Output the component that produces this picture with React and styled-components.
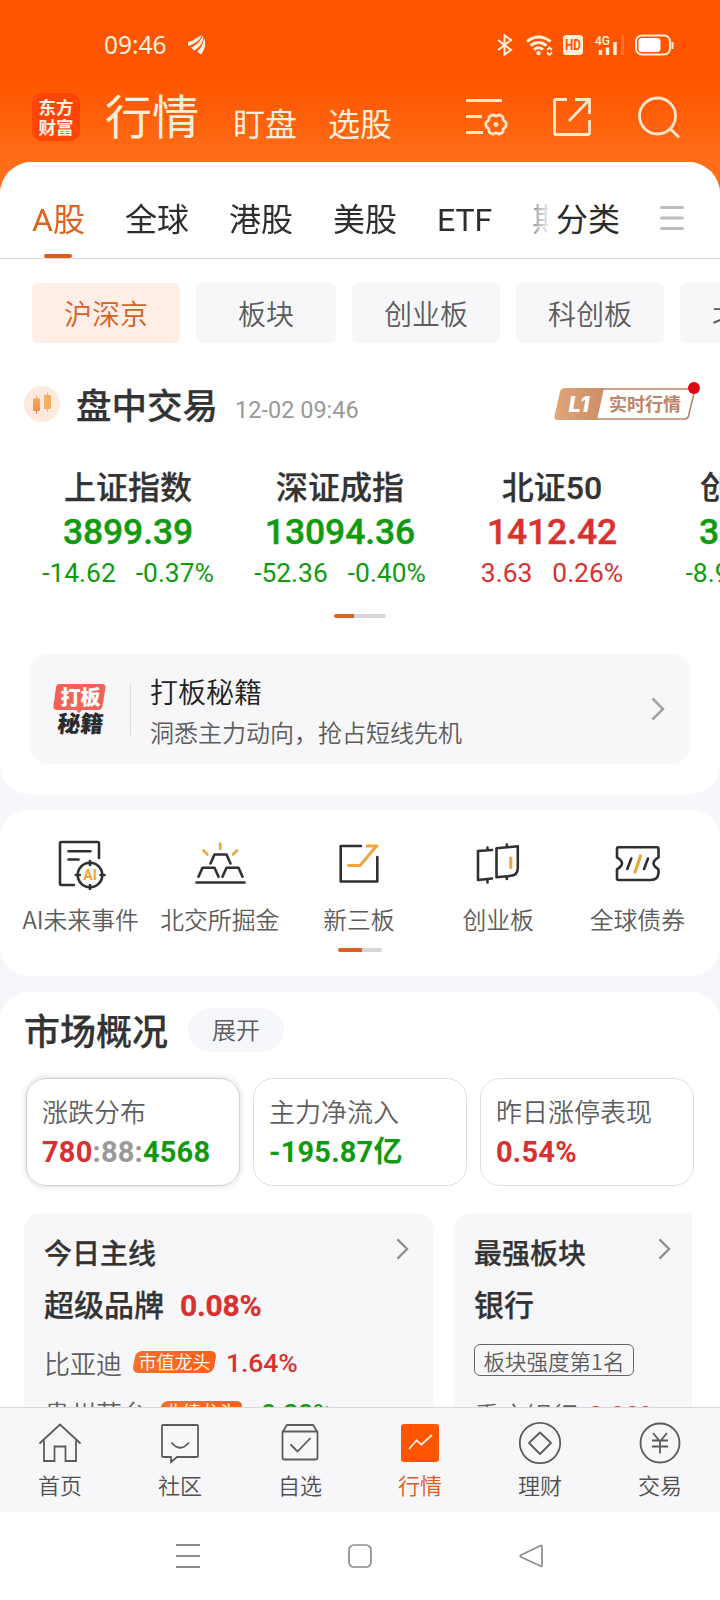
import styled, { createGlobalStyle } from 'styled-components';

const GlobalStyle = createGlobalStyle`
    *{
        box-sizing: border-box;
    }
    body{
        margin: 0;
        background: #fff;
        font-family: Roboto, "Noto Sans CJK SC", sans-serif;
        color: #333;
    }
    svg{
        display: block;
        flex: none;
    }
`

const Phone = styled.div`
    display: flex;
    flex-direction: column;
    width: 720px;
    height: 1600px;
    overflow: hidden;
    white-space: nowrap;
    background: linear-gradient(#ff5500 0, #ff5500 78px, #ff6f1a 168px, #ff6a14 200px);
`

/* ---------- top ---------- */

const StatusBar = styled.div`
    display: flex;
    align-items: center;
    height: 90px;
    padding: 0 46px 0 104px;
    color: #fff0dc;

    .time{
        flex: 1;
        display: flex;
        align-items: center;
        gap: 20px;
        font: 400 24.5px/30px "Noto Sans", sans-serif;
    }
`

const AppBar = styled.header`
    display: flex;
    align-items: center;
    height: 72px;
    padding: 0 39px 18px 32px;
    color: #ffeedb;
`

const Logo = styled.div`
    display: flex;
    flex-direction: column;
    justify-content: center;
    width: 48px;
    height: 48px;
    border-radius: 10px;
    background: #ff4508;
    color: #fff3e4;
    text-align: center;
    font: 700 17.5px/20px "Noto Sans CJK SC", sans-serif;
`

const AppTabs = styled.nav`
    display: flex;
    align-items: baseline;
    flex: 1;
    margin: 7px 0 0 25px;
    font-size: 32px;
    line-height: 56px;
    gap: 31px;

    b{
        font-weight: 400;
        font-size: 47px;
        margin-right: 3px;
    }
    span{
        position: relative;
        top: 2px;
    }
`

const AppActions = styled.div`
    display: flex;
    align-items: center;
    gap: 45px;

    svg:first-child{
        margin-right: -1px;
    }
`

const Content = styled.main`
    display: flex;
    flex-direction: column;
    gap: 16px;
    flex: 1;
    min-height: 0;
    overflow: hidden;
    border-radius: 32px 32px 0 0;
    background: #f5f7fa;
`

const Panel = styled.section`
    flex: none;
    height: ${p => p.$height};
    border-radius: ${p => p.$radius || '28px'};
    background: #fff;
    overflow: hidden;
`

/* ---------- tabs and chips ---------- */

const TabBar = styled.div`
    display: flex;
    align-items: center;
    height: 97px;
    padding: 0 36px 0 32px;
    border-bottom: 1px solid #d9d9db;
    font-size: 32px;

    svg{
        margin-top: 16px;
    }
`

const TabScroll = styled.div`
    display: flex;
    gap: 40px;
    width: 516px;
    height: 96px;
    overflow: hidden;
    -webkit-mask-image: linear-gradient(90deg, #000 480px, transparent 520px);
    mask-image: linear-gradient(90deg, #000 480px, transparent 520px);
`

const Tab = styled.span`
    position: relative;
    flex: none;
    line-height: 116px;
    color: ${p => p.$active ? '#e0601c' : '#2d2d2d'};

    &::after{
        content: '';
        display: ${p => p.$active ? 'block' : 'none'};
        position: absolute;
        left: 12px;
        top: 92px;
        width: 28px;
        height: 4px;
        border-radius: 2px;
        background: #dd5b1d;
    }
`

const SortTab = styled.span`
    flex: 1;
    padding-left: 8px;
    line-height: 116px;
    height: 96px;
    color: #2d2d2d;
`

const Chips = styled.div`
    display: flex;
    gap: 16px;
    padding: 24px 0 0 32px;
`

const Chip = styled.span`
    flex: none;
    min-width: 140px;
    height: 60px;
    padding: 0 32px;
    border-radius: 6px;
    text-align: center;
    font-size: 28px;
    font-weight: 350;
    line-height: 65px;
    background: ${p => p.$active ? '#ffeee6' : '#f7f7fa'};
    color: ${p => p.$active ? '#d8601f' : '#5c5c5c'};
`

/* ---------- index quotes ---------- */

const SessionRow = styled.div`
    display: flex;
    align-items: center;
    height: 54px;
    margin-top: 34px;
    padding: 0 20px 0 24px;

    h2{
        margin: 6px 17px 0 16px;
        font-size: 35.5px;
        line-height: 50px;
        font-weight: 500;
        -webkit-text-stroke: .25px;
    }
    time{
        flex: 1;
        margin-top: 12px;
        font-size: 23.5px;
        line-height: 30px;
        color: #999;
    }
`

const LevelBadge = styled.div`
    position: relative;
    display: flex;
    align-items: center;
    width: 146px;
    height: 32px;

    svg{
        position: absolute;
        inset: 0;
        overflow: visible;
    }
    i{
        position: relative;
        width: 50px;
        text-align: center;
        font: italic 800 22px/33px Inter, sans-serif;
        color: #fff;
    }
    span{
        position: relative;
        margin-left: 5px;
        font-size: 18px;
        line-height: 33px;
        font-weight: 700;
        color: #bd8469;
    }
`

const Quotes = styled.div`
    display: flex;
    margin: 35px 0 0 22px;
`

const Quote = styled.div`
    flex: none;
    width: 212px;
    text-align: center;
    color: ${p => p.$up ? '#d93030' : '#109a10'};

    h3{
        margin: 0;
        font-size: 32px;
        line-height: 44px;
        font-weight: 500;
        color: #333;
        -webkit-text-stroke: .25px;
    }
    strong{
        display: block;
        font-size: 35.5px;
        line-height: 44px;
        font-weight: 500;
        letter-spacing: -.1px;
        -webkit-text-stroke: .4px;
    }
    div{
        display: flex;
        justify-content: center;
        gap: 20px;
        font-size: 26.4px;
        line-height: 38px;
    }
`

const Pager = styled.div`
    width: ${p => p.$width}px;
    height: 4px;
    margin: ${p => p.$top}px auto 0;
    border-radius: 2px;
    background: linear-gradient(90deg, #dd5f22 ${p => p.$done}px, #d3d6da ${p => p.$done}px);
`

const Promo = styled.a`
    display: flex;
    align-items: center;
    height: 110px;
    margin: 36px 30px 0;
    padding: 0 25px 0 23px;
    border-radius: 18px;
    background: #f7f7fa;

    .text{
        flex: 1;
        margin: 7px 0 0 19px;
    }
    h4{
        margin: 0;
        font-size: 28px;
        line-height: 42px;
        font-weight: 350;
        color: #222;
    }
    p{
        margin: 0;
        font-size: 24px;
        line-height: 38px;
        font-weight: 350;
        color: #5c5c5c;
    }
`

const PromoMark = styled.div`
    position: relative;
    width: 55px;
    height: 52px;
    text-align: center;
    font: 700 20px/24px "Noto Sans CJK SC", sans-serif;
    color: #2b2b2b;

    svg{
        position: absolute;
        left: -1px;
        top: 1px;
    }
    b{
        display: block;
        position: relative;
        line-height: 28px;
        color: #fff;
    }
    span{
        display: block;
        font-size: 23px;
        font-weight: 900;
        line-height: 23px;
        transform: skewX(-5deg);
    }
`

const Divider = styled.span`
    width: 1px;
    height: 52px;
    margin-left: 22px;
    background: #dcdcdf;
`

/* ---------- shortcuts ---------- */

const Shortcuts = styled.div`
    display: grid;
    grid-template-columns: repeat(5, 139.2px);
    padding: 28px 0 0 11px;
`

const Shortcut = styled.a`
    display: flex;
    flex-direction: column;
    align-items: center;
    font-family: "Noto Sans CJK SC", sans-serif;
    font-size: 23.800px;
    line-height: 36px;
    font-weight: 350;
    color: #5c5c5c;

    svg{
        margin-bottom: 11px;
    }
`

/* ---------- market overview ---------- */

const SectionHead = styled.div`
    display: flex;
    align-items: center;
    height: 44px;
    margin: 16px 0 0 24px;

    h2{
        margin: 5px 20px 0 0;
        font-size: 36px;
        line-height: 44px;
        font-weight: 500;
        -webkit-text-stroke: .25px;
    }
    span{
        width: 96px;
        height: 44px;
        border-radius: 22px;
        background: #f5f7fa;
        text-align: center;
        font-size: 24px;
        font-weight: 350;
        line-height: 47px;
        color: #5c5c5c;
    }
`

const Stats = styled.div`
    display: flex;
    gap: 13px;
    margin: 26px 26px 0;
`

const Stat = styled.div`
    flex: 1;
    height: 108px;
    padding: 15px 0 0 15px;
    border: 1px solid ${p => p.$active ? '#d2d2d2' : '#e0e0e0'};
    border-radius: 20px;
    box-shadow: ${p => p.$active ? '0 0 6px rgba(0, 0, 0, .16)' : 'none'};

    h5{
        margin: 0;
        font-size: 26px;
        line-height: 38px;
        font-weight: 350;
        color: #5f5f5f;
    }
    div{
        font-size: 29px;
        line-height: 41px;
        font-weight: 700;
        letter-spacing: .2px;
        color: #999;
    }
`

const Num = styled.span`
    color: ${p => p.$up ? '#d93030' : '#109a10'};
`

const Boards = styled.div`
    display: flex;
    gap: 21px;
    margin: 27px 28px 0 24px;
`

const Board = styled.div`
    width: ${p => p.$width}px;
    height: 280px;
    padding: 22px 20px 0;
    border-radius: ${p => p.$radius};
    background: #f7f7fa;

    header{
        display: flex;
        align-items: center;
        justify-content: space-between;
        height: 40px;
        padding-right: ${p => p.$inset}px;
        font-size: 28px;
        line-height: 42px;
        font-weight: 500;
        -webkit-text-stroke: .25px;
    }
    header svg{
        margin-top: -12px;
    }
    h3{
        display: flex;
        gap: 16px;
        margin: 8px 0 0;
        font-size: 30px;
        line-height: 46px;
        font-weight: 500;
        -webkit-text-stroke: .25px;
    }
    h3 span{
        font-size: 30px;
        font-weight: 700;
        letter-spacing: -.2px;
    }
`

const StockRow = styled.div`
    display: flex;
    align-items: center;
    height: 50px;
    margin-top: ${p => p.$top || 0}px;
    font-size: 26px;
    font-weight: 350;
    color: #5f5f5f;

    span{
        font-size: 26.500px;
        line-height: 46px;
        font-weight: 500;
        margin: 2px 0 0 10px;
        letter-spacing: -.1px;
    }
`

const LeaderTag = styled.em`
    width: 81px;
    height: 22px;
    margin: -1px 1px 0 12px;
    border-radius: 6px;
    transform: skewX(-10deg);
    background: linear-gradient(90deg, #f2702c, #f9611a);
    font-size: 18px;
    font-weight: 400;
    line-height: 23px;
    font-style: normal;
    text-align: center;
    color: #fff4e8;

    b{
        display: block;
        font-weight: 400;
        transform: skewX(10deg);
    }
`

const RankTag = styled.div`
    width: 160px;
    height: 32px;
    margin-top: 15px;
    border: 1px solid #666;
    border-radius: 6px;
    text-align: center;
    font-family: "Noto Sans CJK SC", sans-serif;
    font-size: 21.500px;
    font-weight: 350;
    line-height: 31px;
    color: #5c5c5c;
`

/* ---------- bottom bars ---------- */

const TabNav = styled.nav`
    display: grid;
    grid-template-columns: repeat(6, 1fr);
    flex: none;
    height: 105px;
    padding-top: 13px;
    border-top: 1px solid #d9d9db;
    background: #f7f7fa;
`

const NavItem = styled.a`
    display: flex;
    flex-direction: column;
    align-items: center;
    font-size: 22px;
    line-height: 36px;
    font-weight: 350;
    color: ${p => p.$active ? '#dd5b1d' : '#505050'};

    svg{
        margin-bottom: 4px;
    }
`

const SystemBar = styled.div`
    display: flex;
    align-items: center;
    justify-content: space-between;
    flex: none;
    height: 88px;
    padding: 0 175px;
    background: #fff;
`

const Chevron = ({ w = 14, h = 24, color = '#999' }) => (
    <svg width={w} height={h} viewBox="0 0 14 24" fill="none" stroke={color} strokeWidth="2.5">
        <path d="M1.500 1.500 12 12 1.500 22.500" />
    </svg>
);

const StatusIcons = () => (
    <svg width="178" height="24" viewBox="0 0 178 24" fill="none" stroke="#fff0dc" strokeWidth="2">
        <path d="M2 7 15 17 8.500 21.500v-19L15 7 2 17" />
        <path d="M31 8.500q11.500-9 23.500 0M34.500 12.500q8-6 16 0M38 16.500q4.500-3.500 9 0" strokeWidth="3" />
        <circle cx="42.500" cy="20" r="2.200" fill="#fff0dc" stroke="none" />
        <path d="m51 17 2.500-2.500L56 17M51 19.500 53.500 22 56 19.500" strokeWidth="1.800" />
        <rect x="67" y="2" width="20" height="20" rx="3.500" fill="#fff0dc" stroke="none" />
        <text x="77" y="17" textAnchor="middle" fill="#ff5500" stroke="none" fontSize="14" fontWeight="700" textLength="16" lengthAdjust="spacingAndGlyphs">HD</text>
        <text x="99" y="12" fill="#fff0dc" stroke="none" fontSize="13" fontWeight="500" textLength="15" lengthAdjust="spacingAndGlyphs">4G</text>
        <path d="M104.500 22v-5M111.500 22v-7.500M119 22V9" strokeWidth="3.400" />
        <path d="M126.500 22V2" strokeWidth="3" opacity=".18" />
        <rect x="140" y="2.500" width="34" height="19" rx="6" />
        <rect x="142.500" y="5" width="22" height="14" rx="3.500" fill="#fff" stroke="none" />
        <path d="M176.500 9v7" />
    </svg>
);

const WingIcon = () => (
    <svg width="20" height="22" viewBox="0 0 20 22" fill="#fff3e4">
        <path d="M1 8C6 7 9 4 15 1c-2 5-7 9-14 11Z" />
        <path d="M4 13.500C10 11 13.500 7 16 1.500c1 6-3 12-9 15Z" />
        <path d="M10 17.500c4-3 6.500-8 7-14 2 6 1.500 11-3 17Z" />
    </svg>
);

const FilterIcon = () => (
    <svg width="42" height="40" viewBox="0 0 42 40" fill="none" stroke="#ffe6cd" strokeWidth="2.800">
        <path d="M0 3.500h36M0 19.500h16M0 35.500h17" />
        <path d="m10 2-2.600 2.300L6.800 7.700 3.400 9.600 0 8.400-3.400 9.600-6.800 7.700-7.400 4.300-10 2v-4l2.600-2.300.6-3.400 3.400-1.900L0-8.400 3.400-9.600 6.800-7.700 7.400-4.300 10-2Z" transform="translate(30 27.500)" strokeLinejoin="round" />
        <circle cx="30" cy="27.500" r="2.400" fill="#ffe6cd" stroke="none" />
    </svg>
);

const ShareIcon = () => (
    <svg width="40" height="40" viewBox="0 0 40 40" fill="none" stroke="#ffe6cd" strokeWidth="2.800">
        <path d="M15 2.500H4q-1.500 0-1.500 1.500v32q0 1.500 1.500 1.500h32q1.500 0 1.500-1.500V23" />
        <path d="M23 2.500h14.500V17M37 3 17 24" />
    </svg>
);

const SearchIcon = () => (
    <svg width="44" height="44" viewBox="0 0 44 44" fill="none" stroke="#ffe6cd" strokeWidth="2.800">
        <circle cx="20.500" cy="21" r="18" />
        <path d="m33 33.500 9 9" />
    </svg>
);

const CandleIcon = () => (
    <svg width="36" height="36" viewBox="0 0 36 36">
        <defs>
            <linearGradient id="candle" x1="0" x2="0" y1="0" y2="1">
                <stop offset="0" stopColor="#f9ae55" />
                <stop offset="1" stopColor="#f58647" />
            </linearGradient>
        </defs>
        <circle cx="18" cy="18" r="18" fill="#fdeade" />
        <path d="M12 9.500h1v3h2q1 0 1 1v10.500q0 1-1 1h-2v3h-1v-3h-2q-1 0-1-1V13.500q0-1 1-1h2Z" fill="url(#candle)" />
        <path d="M23 6.500h1v2.500h2q1 0 1 1v12q0 1-1 1h-2v2.500h-1V23h-2q-1 0-1-1V10q0-1 1-1h2Z" fill="#f9ad62" />
    </svg>
);

const shortcuts = [
    {
        label: 'AI未来事件',
        icon: <>
            <path d="M20 47H7.500Q6 47 6 45.500v-40Q6 4 7.500 4h36Q45 4 45 5.500V20M14.500 13.300h22M14.500 21.500h10" />
            <circle cx="36" cy="37" r="12.300" />
            <path d="M36 23v4M36 47v4M21.800 37h4M46.500 37h4" />
            <text x="36" y="42" textAnchor="middle" fill="#eba63c" stroke="none" fontFamily="Roboto" fontSize="14" fontWeight="700">AI</text>
        </>,
    },
    {
        label: '北交所掘金',
        icon: <>
            <path d="M3.500 44.500h48M5.500 38.700l4-9h12l4 9M29.500 38.700l4-9H45.500l4 9M17.500 25.500l4-9h12l4 9" />
            <path d="M27.200 11V5.500M14.500 16.500 10.500 12.500M40 16.500l4-4" stroke="#eba63c" />
        </>,
    },
    {
        label: '新三板',
        icon: <>
            <path d="M29 8H8.700v35.500h36.600V19" />
            <path d="M16.500 27.500H28L44.500 8M35 8h10" stroke="#eba63c" strokeWidth="3" />
        </>,
    },
    {
        label: '创业板',
        icon: <>
            <path d="M21 12 7 13v29l14-1.500M16.500 9.500V12.500M16.500 41.500v3" />
            <path d="M25.500 10.300l21.300-2V30q0 7.500-8 8l-13.300 1.300ZM35.800 6.500v2.500M35.800 38.500v2.500" />
            <path d="M39.800 20v9.500" stroke="#eba63c" strokeWidth="3.200" />
        </>,
    },
    {
        label: '全球债券',
        icon: <>
            <path d="M8.500 9.300Q7 9.300 7 10.800v8.500q10 6 0 12v9.200Q7 42 8.500 42h32q8 0 8-7.500v-3.200q-10-6 0-12v-8.500q0-1.500-1.500-1.500Z" />
            <path d="M21.300 20.500l-4 10.500M38 20.500l-4 10.500" />
            <path d="M30.500 18l-5.500 16" stroke="#eba63c" strokeWidth="3.200" />
        </>,
    },
];

const navItems = [
    { label: '首页', icon: <path d="m1.500 22.500 20.500-19 20.500 19M6 19.500V40h10.500V25.500h11V40H38V19.500" /> },
    { label: '社区', icon: <path d="M5 4h34q1 0 1 1v30q0 1-1 1H19l-6 5v-5H5q-1 0-1-1V5q0-1 1-1ZM13.500 21.500q8.500 10.500 17.500 0" /> },
    { label: '自选', icon: <path d="M4.500 11 9 4h26l4.500 7v26q0 1.500-1.500 1.500H6q-1.500 0-1.500-1.500ZM4.500 10.500h35M12.500 23.500l7 7L32.500 17" /> },
    {
        label: '行情',
        active: true,
        icon: <>
            <rect x="3" y="3" width="38" height="38" rx="3" fill="#ff5500" stroke="none" />
            <path d="m11 28 7.500-8.500 5 4L34 14" stroke="#ffeedb" />
        </>,
    },
    {
        label: '理财',
        icon: <>
            <circle cx="22" cy="22" r="20.200" />
            <path d="M22 11.500 33 22 22 33 11 22Z" strokeLinejoin="round" />
        </>,
    },
    {
        label: '交易',
        icon: <>
            <circle cx="22" cy="22" r="19.500" />
            <path d="m15 12 7 8.500L29 12M22 20v12.500M14 19.500h16M14 25.500h16" />
        </>,
    },
];

const quotes = [
    { name: '上证指数', value: '3899.39', diff: '-14.62', rate: '-0.37%' },
    { name: '深证成指', value: '13094.36', diff: '-52.36', rate: '-0.40%' },
    { name: '北证50', value: '1412.42', diff: '3.63', rate: '0.26%', up: true },
    { name: '创业板指', value: '3083.51', diff: '-8.99', rate: '-0.29%' },
];

const tabs = ['A股', '全球', '港股', '美股', 'ETF', '期货'];
const chips = ['沪深京', '板块', '创业板', '科创板', '北交所'];

const App = () => {
    return (
        <>
            <GlobalStyle />
            <Phone lang="zh-CN">
                <StatusBar>
                    <div className="time">09:46 <WingIcon /></div>
                    <StatusIcons />
                </StatusBar>
                <AppBar>
                    <Logo><span>东方</span><span>财富</span></Logo>
                    <AppTabs><b>行情</b><span>盯盘</span><span>选股</span></AppTabs>
                    <AppActions>
                        <FilterIcon />
                        <ShareIcon />
                        <SearchIcon />
                    </AppActions>
                </AppBar>

                <Content>
                    <Panel $height="632px" $radius="0 0 28px 28px">
                        <TabBar>
                            <TabScroll>
                                {tabs.map((t, i) => <Tab key={t} $active={i === 0}>{t}</Tab>)}
                            </TabScroll>
                            <SortTab>分类</SortTab>
                            <svg width="24" height="26" viewBox="0 0 24 26" stroke="#bdbdbd" strokeWidth="3" strokeLinecap="round">
                                <path d="M1.500 2.500h21M1.500 13h21M1.500 23.500h21" />
                            </svg>
                        </TabBar>
                        <Chips>
                            {chips.map((c, i) => <Chip key={c} $active={i === 0}>{c}</Chip>)}
                        </Chips>

                        <SessionRow>
                            <CandleIcon />
                            <h2>盘中交易</h2>
                            <time>12-02 09:46</time>
                            <LevelBadge>
                                <svg width="146" height="32" viewBox="0 0 146 32">
                                    <defs>
                                        <linearGradient id="level" x1="0" x2="1">
                                            <stop offset="0" stopColor="#dfa679" />
                                            <stop offset="1" stopColor="#cc8e69" />
                                        </linearGradient>
                                    </defs>
                                    <path d="M11 0h39l-7 32H4q-4 0-3.500-4L6 4q1-4 5-4Z" fill="url(#level)" />
                                    <path d="M49 1h92l-6.500 27q-.8 3-3.500 3H43" fill="none" stroke="#bd8469" strokeWidth="1.600" />
                                    <circle cx="140" cy="0" r="6" fill="#e60012" />
                                </svg>
                                <i>L1</i>
                                <span>实时行情</span>
                            </LevelBadge>
                        </SessionRow>

                        <Quotes>
                            {quotes.map(q => (
                                <Quote key={q.name} $up={q.up}>
                                    <h3>{q.name}</h3>
                                    <strong>{q.value}</strong>
                                    <div><span>{q.diff}</span><span>{q.rate}</span></div>
                                </Quote>
                            ))}
                        </Quotes>
                        <Pager $width={52} $done={20} $top={22} />

                        <Promo>
                            <PromoMark>
                                <svg width="55" height="30" viewBox="0 0 55 30">
                                    <path d="M7 0h43q4 0 3.500 4l-3 18q-.7 4-4.500 4H30l-3 3-3-3H5q-4 0-3.500-4L4 3.500Q4.500 0 7 0Z" fill="#ef6358" />
                                </svg>
                                <b>打板</b>
                                <span>秘籍</span>
                            </PromoMark>
                            <Divider />
                            <div className="text">
                                <h4>打板秘籍</h4>
                                <p>洞悉主力动向，抢占短线先机</p>
                            </div>
                            <Chevron color="#a3a3a3" />
                        </Promo>
                    </Panel>

                    <Panel $height="166px">
                        <Shortcuts>
                            {shortcuts.map(s => (
                                <Shortcut key={s.label}>
                                    <svg width="54" height="52" viewBox="0 0 54 52" fill="none" stroke="#303030" strokeWidth="2.600" strokeLinecap="round" strokeLinejoin="round">
                                        {s.icon}
                                    </svg>
                                    {s.label}
                                </Shortcut>
                            ))}
                        </Shortcuts>
                        <Pager $width={44} $done={24} $top={11} />
                    </Panel>

                    <Panel $height="520px">
                        <SectionHead><h2>市场概况</h2><span>展开</span></SectionHead>
                        <Stats>
                            <Stat $active>
                                <h5>涨跌分布</h5>
                                <div><Num $up>780</Num>:88:<Num>4568</Num></div>
                            </Stat>
                            <Stat>
                                <h5>主力净流入</h5>
                                <div><Num>-195.87亿</Num></div>
                            </Stat>
                            <Stat>
                                <h5>昨日涨停表现</h5>
                                <div><Num $up>0.54%</Num></div>
                            </Stat>
                        </Stats>
                        <Boards>
                            <Board $width={409} $radius="16px" $inset={4}>
                                <header>今日主线<Chevron w={13} h={22} color="#8f8f8f" /></header>
                                <h3>超级品牌<Num $up>0.08%</Num></h3>
                                <StockRow $top={8}>比亚迪<LeaderTag><b>市值龙头</b></LeaderTag><Num $up>1.64%</Num></StockRow>
                                <StockRow>贵州茅台<LeaderTag><b>业绩龙头</b></LeaderTag><Num>-0.28%</Num></StockRow>
                            </Board>
                            <Board $width={238} $radius="16px 0 0 0" $inset={1}>
                                <header>最强板块<Chevron w={13} h={22} color="#8f8f8f" /></header>
                                <h3>银行</h3>
                                <RankTag>板块强度第1名</RankTag>
                                <StockRow $top={13}>重庆银行<Num $up>0.99%</Num></StockRow>
                            </Board>
                        </Boards>
                    </Panel>
                </Content>

                <TabNav>
                    {navItems.map(n => (
                        <NavItem key={n.label} $active={n.active}>
                            <svg width="44" height="44" viewBox="0 0 44 44" fill="none" stroke="#5c5c5c" strokeWidth="1.800">
                                {n.icon}
                            </svg>
                            {n.label}
                        </NavItem>
                    ))}
                </TabNav>
                <SystemBar>
                    <svg width="26" height="26" viewBox="0 0 26 26" fill="none" stroke="#8c8c8c" strokeWidth="1.800">
                        <path d="M1 2h24M1 13h24M1 24h24" />
                    </svg>
                    <svg width="26" height="26" viewBox="0 0 26 26" fill="none" stroke="#8c8c8c" strokeWidth="1.700">
                        <rect x="2" y="2" width="22" height="22" rx="5" />
                    </svg>
                    <svg width="26" height="26" viewBox="0 0 26 26" fill="none" stroke="#8c8c8c" strokeWidth="1.700" strokeLinejoin="round">
                        <path d="M22 2.500q1-.3 1 1v19q0 1.200-1 .8L2 14q-1.500-1 0-2Z" />
                    </svg>
                </SystemBar>
            </Phone>
        </>
    );
};

export default App;
